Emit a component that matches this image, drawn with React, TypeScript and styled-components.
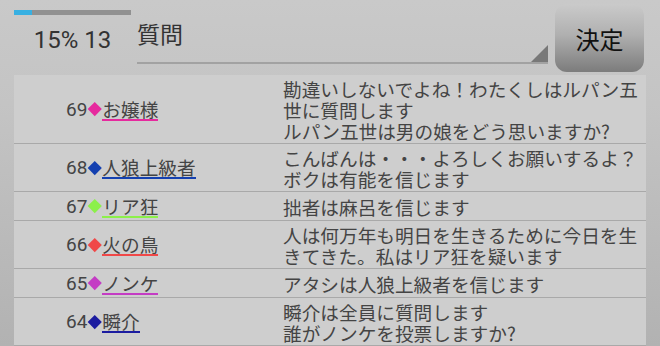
import React from "react";
import styled, { createGlobalStyle } from "styled-components";

const GlobalStyle = createGlobalStyle`
  html, body {
    margin: 0;
    padding: 0;
  }
  body {
    width: 660px;
    height: 346px;
    overflow: hidden;
    background: linear-gradient(#c9c9c9 0%, #c4c4c4 30%, #b2b2b2 100%);
    font-family: "Roboto", "Noto Sans CJK JP", sans-serif;
    color: #444;
  }
`;

const Screen = styled.div`
  width: 660px;
  height: 346px;
  display: flex;
  flex-direction: column;
`;

const TopBar = styled.div`
  height: 76px;
  box-sizing: border-box;
  display: flex;
  align-items: flex-start;
  padding: 4px 16px 0 14px;
`;

const Status = styled.div`
  width: 117px;
  display: flex;
  flex-direction: column;
  align-items: center;
  padding-top: 6px;
`;

const Progress = styled.div<{ $value: number }>`
  width: 100%;
  height: 5px;
  background: #919191;
  position: relative;
  &::before {
    content: "";
    position: absolute;
    left: 0;
    top: 0;
    bottom: 0;
    width: ${(p) => p.$value}%;
    background: #38b0e2;
  }
`;

const StatusText = styled.div`
  margin-top: 11px;
  font-size: 24px;
  line-height: 28px;
  color: #333;
  white-space: nowrap;
`;

const QuestionInput = styled.div`
  flex: 1;
  position: relative;
  margin: 0 7px 0 6px;
  height: 58px;
  border-bottom: 2px solid #a2a2a2;
  font-family: "Noto Sans CJK JP", sans-serif;
  font-size: 23px;
  line-height: 26px;
  color: #333;
  &::after {
    content: "";
    position: absolute;
    right: 0;
    bottom: 0;
    width: 0;
    height: 0;
    border-left: 17px solid transparent;
    border-bottom: 17px solid #787878;
  }
`;

const InputText = styled.div`
  padding-top: 16px;
`;

const DecideButton = styled.button`
  width: 89px;
  height: 68px;
  border: none;
  border-radius: 12px;
  background: linear-gradient(#cacaca 0%, #b0b0b0 45%, #7c7c7c 100%);
  font-family: "Noto Sans CJK JP", sans-serif;
  font-size: 24px;
  color: #111;
  padding: 0;
  cursor: pointer;
`;

const LogPanel = styled.div`
  margin: 0 14px;
  background: #cecece;
  flex: 1;
`;

const LogRow = styled.div`
  display: flex;
  align-items: center;
  padding: 2.5px 0;
  border-bottom: 1px solid #a9a9a9;
  font-size: 18.67px;
  line-height: 21px;
`;

const Speaker = styled.div`
  width: 269px;
  flex-shrink: 0;
  box-sizing: border-box;
  padding-left: 52px;
  display: flex;
  align-items: center;
`;

const Number = styled.span`
  font-family: "Roboto", sans-serif;
  font-size: 19px;
  line-height: 21px;
`;

const Mark = styled.span<{ $color: string }>`
  display: inline-block;
  width: 9.5px;
  height: 9.5px;
  margin: 0 2.5px 0 3px;
  background: ${(p) => p.$color};
  transform: rotate(45deg);
`;

const Name = styled.span<{ $color: string }>`
  display: inline-block;
  font-family: "Noto Sans CJK JP", sans-serif;
  line-height: 21px;
  border-bottom: 2px solid ${(p) => p.$color};
`;

const Message = styled.div`
  flex: 1;
  font-family: "Noto Sans CJK JP", sans-serif;
  white-space: pre-line;
`;

type Entry = { no: number; name: string; color: string; text: string };

const entries: Entry[] = [
  {
    no: 69,
    name: "お嬢様",
    color: "#e62a9e",
    text: "勘違いしないでよね！わたくしはルパン五世に質問します\nルパン五世は男の娘をどう思いますか?",
  },
  {
    no: 68,
    name: "人狼上級者",
    color: "#1440b0",
    text: "こんばんは・・・よろしくお願いするよ？\nボクは有能を信じます",
  },
  { no: 67, name: "リア狂", color: "#8cf04a", text: "拙者は麻呂を信じます" },
  {
    no: 66,
    name: "火の鳥",
    color: "#f04848",
    text: "人は何万年も明日を生きるために今日を生きてきた。私はリア狂を疑います",
  },
  { no: 65, name: "ノンケ", color: "#c43cc4", text: "アタシは人狼上級者を信じます" },
  {
    no: 64,
    name: "瞬介",
    color: "#1c1ca0",
    text: "瞬介は全員に質問します\n誰がノンケを投票しますか?",
  },
];

export default function App() {
  return (
    <>
      <GlobalStyle />
      <Screen>
        <TopBar>
          <Status>
            <Progress $value={15} />
            <StatusText>15% 13</StatusText>
          </Status>
          <QuestionInput>
            <InputText>質問</InputText>
          </QuestionInput>
          <DecideButton>決定</DecideButton>
        </TopBar>
        <LogPanel>
          {entries.map((e) => (
            <LogRow key={e.no}>
              <Speaker>
                <Number>{e.no}</Number>
                <Mark $color={e.color} />
                <Name $color={e.color}>{e.name}</Name>
              </Speaker>
              <Message>{e.text}</Message>
            </LogRow>
          ))}
        </LogPanel>
      </Screen>
    </>
  );
}
